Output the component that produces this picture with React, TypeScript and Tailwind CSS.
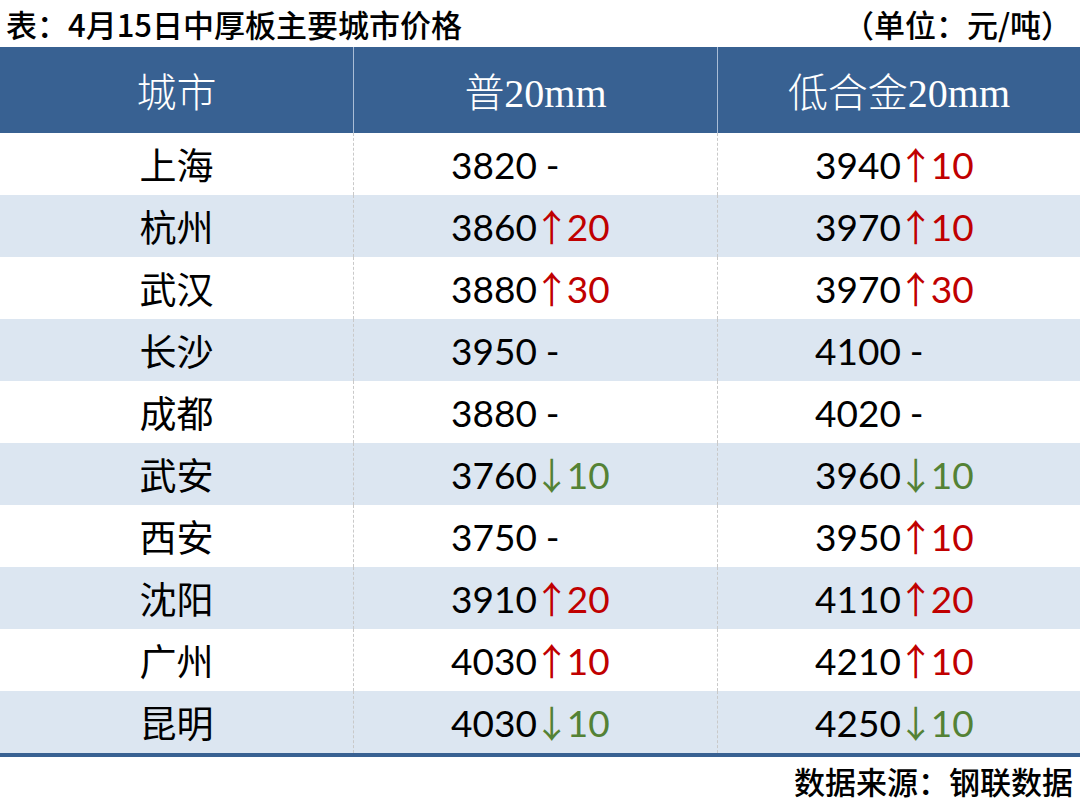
const rows: { city: string; a: string; ad?: [string, string]; b: string; bd?: [string, string] }[] = [
  { city: "上海", a: "3820", b: "3940", bd: ["↑", "10"] },
  { city: "杭州", a: "3860", ad: ["↑", "20"], b: "3970", bd: ["↑", "10"] },
  { city: "武汉", a: "3880", ad: ["↑", "30"], b: "3970", bd: ["↑", "30"] },
  { city: "长沙", a: "3950", b: "4100" },
  { city: "成都", a: "3880", b: "4020" },
  { city: "武安", a: "3760", ad: ["↓", "10"], b: "3960", bd: ["↓", "10"] },
  { city: "西安", a: "3750", b: "3950", bd: ["↑", "10"] },
  { city: "沈阳", a: "3910", ad: ["↑", "20"], b: "4110", bd: ["↑", "20"] },
  { city: "广州", a: "4030", ad: ["↑", "10"], b: "4210", bd: ["↑", "10"] },
  { city: "昆明", a: "4030", ad: ["↓", "10"], b: "4250", bd: ["↓", "10"] },
];

const Price = ({ value, delta }: { value: string; delta?: [string, string] }) => (
  <div className="flex items-center pl-[97px] border-l border-dashed border-[#c9c9c9]">
    <span>{value}</span>
    {delta ? (
      <span className={`flex items-center ${delta[0] === "↑" ? "text-[#c00000]" : "text-[#548235]"}`}>
        <span className="flex justify-center w-[30px] font-['Noto_Sans_CJK_SC'] font-normal">{delta[0]}</span>
        {delta[1]}
      </span>
    ) : (
      <span className="ml-[9px]">-</span>
    )}
  </div>
);

export default function App() {
  return (
    <div className="w-[1080px] h-[803px] bg-white font-['Lato','Noto_Sans_CJK_SC',sans-serif] text-black">
      <div className="h-[47px] flex items-center justify-between pl-[6px] pr-[8px] text-[31px] font-['Noto_Sans_CJK_SC',sans-serif] font-medium leading-none">
        <span>表：4月15日中厚板主要城市价格</span>
        <span>（单位：元/吨）</span>
      </div>
      <div className="h-[86px] grid grid-cols-[353px_364px_363px] bg-[#386192] text-white text-[40px] font-['Liberation_Serif','Noto_Sans_CJK_SC',serif] font-light">
        <div className="flex items-center justify-center pt-[8px]">城市</div>
        <div className="flex items-center justify-center pt-[8px] border-l border-[#a9bdd6]">普20mm</div>
        <div className="flex items-center justify-center pt-[8px] border-l border-[#a9bdd6]">低合金20mm</div>
      </div>
      <div className="border-b-[4px] border-[#386192]">
        {rows.map((r, i) => (
          <div
            key={r.city}
            className={`h-[62px] grid grid-cols-[353px_364px_363px] text-[37px] leading-none ${i % 2 === 1 ? "bg-[#dce6f1]" : "bg-white"}`}
          >
            <div className="flex items-center justify-center font-['Noto_Sans_CJK_SC',sans-serif]">{r.city}</div>
            <Price value={r.a} delta={r.ad} />
            <Price value={r.b} delta={r.bd} />
          </div>
        ))}
      </div>
      <div className="flex justify-end pr-[7px] pt-[8px] text-[31px] font-['Noto_Sans_CJK_SC',sans-serif] font-medium leading-none">
        数据来源：钢联数据
      </div>
    </div>
  );
}
